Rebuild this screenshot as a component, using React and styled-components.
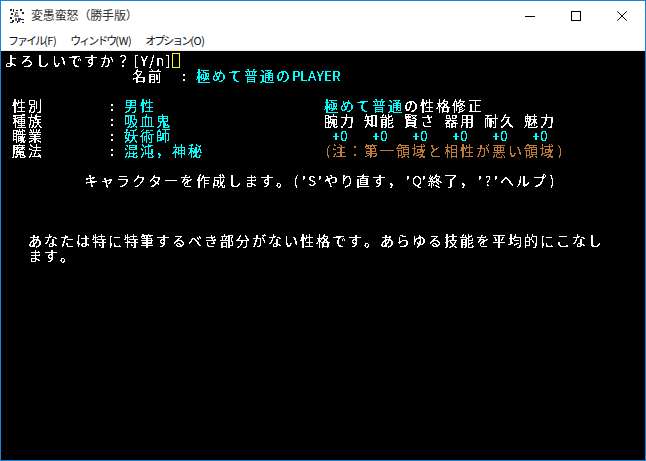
import React from 'react';
import styled, { createGlobalStyle } from 'styled-components';

const Global = createGlobalStyle`
  html, body { margin: 0; padding: 0; background: #000; }
  #root { width: 646px; height: 461px; }
`;

const Win = styled.div`
  width: 646px; height: 461px; box-sizing: border-box;
  border: 1px solid #1883d7;
  display: flex; flex-direction: column; background: #fff; overflow: hidden;
`;
const TitleBar = styled.div`
  height: 29px; flex: none; display: flex; align-items: center; background: #fff;
`;
const AppIcon = styled.svg`
  width: 16px; height: 16px; margin: 0 6px 0 8px; flex: none;
`;
const TitleText = styled.div`
  flex: 1; font: 12px/16px "Noto Sans CJK JP", sans-serif; color: #333; letter-spacing: -0.15px; margin-top: -1px;
`;
const Controls = styled.div`display: flex; height: 29px;`;
const Ctl = styled.div`
  width: 46px; display: flex; align-items: center; justify-content: center;
  svg { display: block; }
`;
const MenuBar = styled.div`
  height: 20px; flex: none; display: flex; background: #fff; border-bottom: 1px solid #f0f0f0;
  padding-left: 7px; gap: 14px; align-items: center;
`;
const MenuItem = styled.div`
  font: 11px/16px "Noto Sans CJK JP", sans-serif; color: #111; letter-spacing: -2px; white-space: pre;
`;
const MenuKey = styled.span`
  letter-spacing: -0.4px; font-size: 11px;
`;
const Term = styled.div`
  flex: 1; background: #000; padding: 2px 0 0 3px;
`;
const Screen = styled.div`
  filter: url(#bitmap);
`;
const Row = styled.div`
  height: 15px; white-space: pre; display: flex; align-items: flex-start;
`;
const Wide = styled.span`
  display: block; width: 16px; height: 15px; flex: none; text-align: left;
  font: 14px/15px "Noto Sans CJK JP", sans-serif; color: ${p => p.$c};
`;
const Narrow = styled.span`
  display: block; width: 8px; height: 15px; text-align: center; flex: none;
  font: 13.5px/15px "Noto Sans CJK JP", sans-serif; color: ${p => p.$c};
`;
const Cursor = styled.span`
  width: 8px; height: 15px; box-sizing: border-box; border: 1px solid #ffff00; flex: none;
`;

const W = '#ffffff', C = '#00ffff', O = '#c07c36';

function Cells({ t, c = W }) {
  return [...t].map((ch, i) =>
    ch.charCodeAt(0) < 128
      ? <Narrow key={i} $c={c}>{ch}</Narrow>
      : <Wide key={i} $c={c}>{ch}</Wide>
  );
}

const rows = [
  [['よろしいですか？[Y/n]', W]],
  [['                名前  : ', W], ['極めて普通のPLAYER', C]],
  [],
  [[' 性別        : ', W], ['男性', C], ['                     ', W], ['極めて普通', C], ['の性格修正', W]],
  [[' 種族        : ', W], ['吸血鬼', C], ['                   ', W], ['腕力 知能 賢さ 器用 耐久 魅力', W]],
  [[' 職業        : ', W], ['妖術師', C], ['                    ', W], ['+0   +0   +0   +0   +0   +0', C]],
  [[' 魔法        : ', W], ['混沌，神秘', C], ['               ', W], ['(注：第一領域と相性が悪い領域)', O]],
  [],
  [["          キャラクターを作成します。('S'やり直す，'Q'終了，'?'ヘルプ)", W]],
  [], [], [],
  [['   あなたは特に特筆するべき部分がない性格です。あらゆる技能を平均的にこなし', W]],
  [['   ます。', W]],
];

export default function App() {
  return (
    <>
      <Global />
      <svg width="0" height="0" style={{ position: 'absolute' }}>
        <filter id="bitmap" colorInterpolationFilters="sRGB" x="0" y="0" width="100%" height="100%">
          <feComponentTransfer>
            <feFuncA type="discrete" tableValues="0 0 1 1 1" />
          </feComponentTransfer>
        </filter>
      </svg>
      <Win>
        <TitleBar>
          <AppIcon viewBox="0 0 16 16" shapeRendering="crispEdges">
            <rect x="1" y="1" width="14" height="14" fill="#fff" />
            <path d="M1 1h2v2H1zM4 1h1v3H4zM7 2h2v1H7zM11 1h2v2h-2zM13 4h2v2h-2zM2 5h2v2H2zM6 5h1v2H6zM1 9h2v2H1zM3 12h2v2H3zM1 14h3v1H1zM8 13h1v2H8zM12 11h3v1h-3zM13 14h2v1h-2z" fill="#222" />
            <path d="M6 4h3v2H6zM5 7h5v2H5z" fill="#888" />
            <path d="M6 10h2v3H6z" fill="#1c8c2c" />
            <path d="M9 10h3v2H9z" fill="#2030c0" />
            <path d="M9 12h2v2H9z" fill="#d02020" />
          </AppIcon>
          <TitleText>変愚蛮怒（勝手版）</TitleText>
          <Controls>
            <Ctl>
              <svg width="10" height="10" viewBox="0 0 10 10" shapeRendering="crispEdges"><path d="M0 5h10v1H0z" fill="#000" /></svg>
            </Ctl>
            <Ctl>
              <svg width="10" height="10" viewBox="0 0 10 10" shapeRendering="crispEdges"><path d="M.5.5h9v9h-9z" fill="none" stroke="#000" /></svg>
            </Ctl>
            <Ctl>
              <svg width="10" height="10" viewBox="0 0 10 10"><path d="M.3.3l9.4 9.4M9.7.3L.3 9.7" fill="none" stroke="#000" strokeWidth="1" /></svg>
            </Ctl>
          </Controls>
        </TitleBar>
        <MenuBar>
          <MenuItem>ファイル<MenuKey>(F)</MenuKey></MenuItem>
          <MenuItem>ウィンドウ<MenuKey>(W)</MenuKey></MenuItem>
          <MenuItem>オプション<MenuKey>(O)</MenuKey></MenuItem>
        </MenuBar>
        <Term>
          <Screen>
            {rows.map((r, i) => (
              <Row key={i}>
                {r.map(([t, c], j) => <Cells key={j} t={t} c={c} />)}
                {i === 0 && <Cursor />}
              </Row>
            ))}
          </Screen>
        </Term>
      </Win>
    </>
  );
}
